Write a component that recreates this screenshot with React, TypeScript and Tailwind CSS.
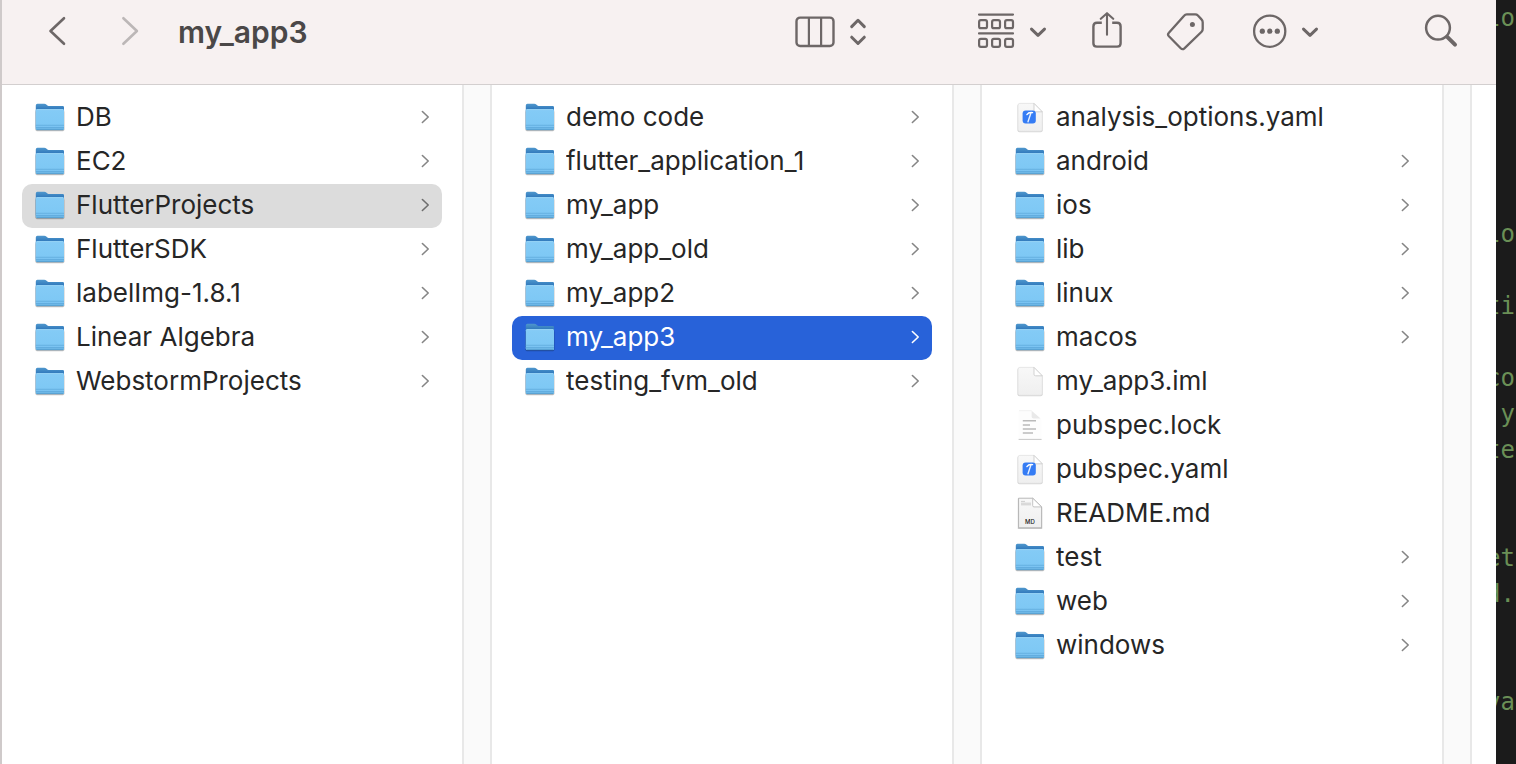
import { useState, type ReactNode } from 'react';

type Kind = 'folder' | 'yaml' | 'blank' | 'lines' | 'markdown';
type Entry = { name: string; kind?: Kind };

const columns: { label: string; selected?: string; entries: Entry[] }[] = [
  {
    label: 'Projects',
    selected: 'FlutterProjects',
    entries: [
      { name: 'DB' },
      { name: 'EC2' },
      { name: 'FlutterProjects' },
      { name: 'FlutterSDK' },
      { name: 'labelImg-1.8.1' },
      { name: 'Linear Algebra' },
      { name: 'WebstormProjects' },
    ],
  },
  {
    label: 'FlutterProjects',
    selected: 'my_app3',
    entries: [
      { name: 'demo code' },
      { name: 'flutter_application_1' },
      { name: 'my_app' },
      { name: 'my_app_old' },
      { name: 'my_app2' },
      { name: 'my_app3' },
      { name: 'testing_fvm_old' },
    ],
  },
  {
    label: 'my_app3',
    entries: [
      { name: 'analysis_options.yaml', kind: 'yaml' },
      { name: 'android' },
      { name: 'ios' },
      { name: 'lib' },
      { name: 'linux' },
      { name: 'macos' },
      { name: 'my_app3.iml', kind: 'blank' },
      { name: 'pubspec.lock', kind: 'lines' },
      { name: 'pubspec.yaml', kind: 'yaml' },
      { name: 'README.md', kind: 'markdown' },
      { name: 'test' },
      { name: 'web' },
      { name: 'windows' },
    ],
  },
];

const editorLines = [
  'lo', '', '', '', '', '', 'lo', '', 'ti', '', 'co', 'y', 'te', '', '', 'et', 'd.', '', '', 'va',
];

function Gradients() {
  return (
    <svg width="0" height="0" className="absolute" aria-hidden="true">
      <defs>
        <linearGradient id="folder-back" x1="0" y1="0" x2="0" y2="1">
          <stop offset="0" stopColor="#4f97cd" />
          <stop offset="0.25" stopColor="#2f78bb" />
          <stop offset="1" stopColor="#2f78bb" />
        </linearGradient>
        <linearGradient id="folder-front" x1="0" y1="0" x2="0" y2="1">
          <stop offset="0" stopColor="#84cbf6" />
          <stop offset="1" stopColor="#7cc7f4" />
        </linearGradient>
        <linearGradient id="paper" x1="0" y1="0" x2="0" y2="1">
          <stop offset="0" stopColor="#f8f8f8" />
          <stop offset="1" stopColor="#efefef" />
        </linearGradient>
      </defs>
    </svg>
  );
}

function FolderIcon() {
  return (
    <svg width="32" height="32" viewBox="0 0 32 32" className="shrink-0" aria-hidden="true">
      <rect x="1.2" y="8.6" width="29.4" height="21.8" rx="1.8" fill="#000" opacity="0.12" />
      <rect x="1.6" y="9.6" width="28.6" height="20.2" rx="1.5" fill="#000" opacity="0.22" />
      <path d="M1.8 4.4Q1.8 2.8 3.4 2.8H10.2Q11.6 2.8 12.6 3.7L13.4 4.4Q14.3 5 15.8 5H28.8Q30 5 30 6.2V26H1.8Z" fill="url(#folder-back)" />
      <path d="M1.8 9.2Q1.8 8.2 2.9 8.2H28.9Q30 8.2 30 9.2V27.8Q30 29 28.8 29H3Q1.8 29 1.8 27.8Z" fill="url(#folder-front)" />
      <path d="M2.6 8.6H29.2" stroke="#a2daf9" strokeWidth="0.8" />
      <path d="M1.8 26H30V27.8Q30 29 28.8 29H3Q1.8 29 1.8 27.8Z" fill="#6db7e6" />
      <path d="M1.8 24.3H30M1.8 26.4H30" stroke="#5fa9dc" strokeWidth="0.8" />
      <path d="M2.6 28.7H29.2" stroke="#4b93c5" strokeWidth="0.7" />
    </svg>
  );
}

function FileIcon({ kind }: { kind: Kind }) {
  return (
    <svg width="32" height="32" viewBox="0 0 32 32" className="shrink-0" aria-hidden="true">
      {kind === 'yaml' || kind === 'blank' ? (
        <>
          <path d="M3.5 5Q3.5 3 5.5 3H20.2L28.7 11.6V29.2Q28.7 31.2 26.7 31.2H5.5Q3.5 31.2 3.5 29.2Z" fill="#000" opacity="0.16" />
          <path d="M4 4.2Q4 2.4 5.8 2.4H20L28.3 10.8V28.6Q28.3 30.3 26.5 30.3H5.8Q4 30.3 4 28.6Z" fill="url(#paper)" stroke="#dedede" strokeWidth="0.7" />
          <path d="M20 2.4V9.2Q20 10.8 21.6 10.8H28.3Z" fill="#fff" stroke="#c8c8c8" strokeWidth="0.8" />
        </>
      ) : null}
      {kind === 'yaml' ? (
        <>
          <rect x="8.6" y="9.4" width="13.2" height="13.2" rx="3" fill="#357cf4" />
          <path d="M16.9 12L14 20.8" stroke="#e8f1ff" strokeWidth="1.4" strokeLinecap="round" />
          <path d="M12.9 13.6Q14.6 11 18.6 11.6" fill="none" stroke="#fff" strokeWidth="1.3" strokeLinecap="round" />
        </>
      ) : null}
      {kind === 'lines' ? (
        <>
          <path d="M4.4 1.6H17.6L27.6 11V30H4.4Z" fill="#fdfdfd" />
          <path d="M5 1.7H17.6" stroke="#eeeeee" strokeWidth="0.8" />
          <path d="M17.6 1.7V7.6Q17.6 9.6 19.6 9.6H26.6Z" fill="#e9e9e9" />
          <path d="M4.6 30.4H27.6" stroke="#c8c8c8" strokeWidth="1" />
          <path d="M8.8 11.8H22M8.8 15.9H16M8.8 20H22M8.8 24H19" stroke="#bababa" strokeWidth="1.5" />
        </>
      ) : null}
      {kind === 'markdown' ? (
        <>
          <path d="M3.8 1.6H19L28.2 10.6V32H3.8Z" fill="#000" opacity="0.2" />
          <path d="M4.6 1.2H18.7L27.6 9.9V30.8H4.6Z" fill="url(#paper)" stroke="#a9a9a9" strokeWidth="0.8" />
          <path d="M18.7 1.2V8.5Q18.7 9.9 20 9.9H27.6Z" fill="#fff" stroke="#b5b5b5" strokeWidth="0.8" />
          <path d="M7 4.4H11M7 6.2H17M7 7.8H17" stroke="#cccccc" strokeWidth="1" />
          <text x="16" y="27.4" textAnchor="middle" fontSize="6" fontWeight="500" fontFamily="Inter, sans-serif" fill="#222">MD</text>
        </>
      ) : null}
    </svg>
  );
}

function Disclosure({ className }: { className: string }) {
  return (
    <svg width="10" height="16" viewBox="0 0 10 16" fill="none" stroke="currentColor" strokeWidth="1.6" strokeLinecap="round" strokeLinejoin="round" className={className} aria-hidden="true">
      <path d="M2.4 2.5L8.2 8L2.4 13.5" />
    </svg>
  );
}

function ToolButton({ label, className = '', children, disabled }: { label: string; className?: string; children: ReactNode; disabled?: boolean }) {
  return (
    <button type="button" aria-label={label} disabled={disabled} className={`flex shrink-0 items-center gap-3 ${className}`}>
      {children}
    </button>
  );
}

function DownChevron() {
  return (
    <svg width="20" height="20" viewBox="0 0 20 20" fill="none" stroke="currentColor" strokeWidth="3" strokeLinecap="round" strokeLinejoin="round">
      <path d="M3.5 7.1L10 13.3L16.5 7.1" />
    </svg>
  );
}

function Toolbar() {
  return (
    <header className="h-[85px] shrink-0 border-b border-[#d3cfcf] bg-[#f7f1f1] text-[#6d6767]">
      <div className="flex h-16 items-center pr-9 pl-11">
        <ToolButton label="Back">
          <svg width="24" height="32" viewBox="0 0 24 32" fill="none" stroke="currentColor" strokeWidth="2.6" strokeLinecap="round" strokeLinejoin="round">
            <path d="M18 2.2L4.5 15L18 27.8" />
          </svg>
        </ToolButton>
        <ToolButton label="Forward" disabled className="ml-12 text-[#bcb7b7]">
          <svg width="24" height="32" viewBox="0 0 24 32" fill="none" stroke="currentColor" strokeWidth="2.6" strokeLinecap="round" strokeLinejoin="round">
            <path d="M5.4 2.2L18.9 15L5.4 27.8" />
          </svg>
        </ToolButton>
        <h1 className="ml-9 text-[30px] leading-8 font-semibold text-[#4b4848]">my_app3</h1>

        <div className="ml-auto flex items-center">
          <ToolButton label="View as columns" className="mr-27">
            <svg width="42" height="34" viewBox="0 0 42 34" fill="none" stroke="currentColor" strokeWidth="2.4">
              <rect x="2.5" y="2.6" width="37" height="28.4" rx="3.6" />
              <path d="M14.9 3V31M27.1 3V31" strokeWidth="2.2" />
            </svg>
            <svg width="20" height="32" viewBox="0 0 20 32" fill="none" stroke="currentColor" strokeWidth="3" strokeLinecap="round" strokeLinejoin="round">
              <path d="M3.7 10.6L10 4.3L16.3 10.6M3.7 21.2L10 27.5L16.3 21.2" />
            </svg>
          </ToolButton>
          <ToolButton label="Group items" className="mr-11">
            <svg width="40" height="40" viewBox="0 0 40 40" fill="none" stroke="currentColor" strokeWidth="2.2" strokeLinecap="round">
              <path d="M3 2.6H37M3 21.4H37" />
              <rect x="3.1" y="8.1" width="7.9" height="8.1" rx="1.8" />
              <rect x="16.1" y="8.1" width="7.9" height="8.1" rx="1.8" />
              <rect x="29.1" y="8.1" width="7.9" height="8.1" rx="1.8" />
              <rect x="3.1" y="26.8" width="7.9" height="8.1" rx="1.8" />
              <rect x="16.1" y="26.8" width="7.9" height="8.1" rx="1.8" />
              <rect x="29.1" y="26.8" width="7.9" height="8.1" rx="1.8" />
            </svg>
            <DownChevron />
          </ToolButton>
          <ToolButton label="Share" className="mr-11">
            <svg width="30" height="40" viewBox="0 0 30 40" fill="none" stroke="currentColor" strokeWidth="2.4" strokeLinejoin="round">
              <path d="M9.8 10.8H5Q1.4 10.8 1.4 14.4V31.2Q1.4 34.6 4.9 34.6H25.1Q28.6 34.6 28.6 31.2V14.4Q28.6 10.8 25 10.8H20.2" />
              <path d="M15 22V1.2M8.8 6L15 0.4L21.2 6" strokeWidth="2.1" strokeLinecap="round" transform="translate(0 0.8)" />
            </svg>
          </ToolButton>
          <ToolButton label="Edit tags" className="mr-[46px]">
            <svg width="40" height="40" viewBox="0 0 40 40" fill="none" stroke="currentColor" strokeWidth="2.3" strokeLinecap="round" strokeLinejoin="round">
              <path d="M20.8 2.4H29.2Q30.8 2.4 31.9 3.5L35.5 7.4Q36.7 8.6 36.7 10.2V17Q36.7 18.6 35.6 19.7L18.4 36.3Q16.5 38 14.7 36.2L2.9 24.3Q1.2 22.5 2.9 20.7L18.1 3.7Q19.2 2.4 20.8 2.4Z" />
              <circle cx="26.4" cy="12.4" r="2.5" fill="currentColor" stroke="none" />
            </svg>
          </ToolButton>
          <ToolButton label="More actions" className="mr-26">
            <svg width="36" height="36" viewBox="0 0 36 36" fill="none" stroke="currentColor" strokeWidth="2.3">
              <circle cx="17.7" cy="17.2" r="15.6" />
              <g fill="currentColor" stroke="none">
                <circle cx="10.3" cy="17.2" r="2.6" />
                <circle cx="17.8" cy="17.2" r="2.6" />
                <circle cx="25.3" cy="17.2" r="2.6" />
              </g>
            </svg>
            <DownChevron />
          </ToolButton>
          <ToolButton label="Search">
            <svg width="36" height="36" viewBox="0 0 36 36" fill="none" stroke="currentColor" strokeLinecap="round">
              <circle cx="14" cy="13.7" r="11.9" strokeWidth="2.5" />
              <path d="M23.2 22.8L31 30.6" strokeWidth="4" />
            </svg>
          </ToolButton>
        </div>
      </div>
    </header>
  );
}

function Row({ entry, state, onSelect }: { entry: Entry; state: 'none' | 'path' | 'active'; onSelect: () => void }) {
  const kind = entry.kind ?? 'folder';
  const tone =
    state === 'active' ? 'bg-[#2862d9] text-white' : state === 'path' ? 'bg-[#dcdcdc] text-[#262626]' : 'text-[#262626]';
  const arrow = state === 'active' ? 'text-white' : state === 'path' ? 'text-[#6e6e6e]' : 'text-[#858585]';
  return (
    <li>
      <button type="button" onClick={onSelect} className={`flex h-11 w-full items-center rounded-[10px] px-3 pb-0.5 text-left ${tone}`}>
        {kind === 'folder' ? <FolderIcon /> : <FileIcon kind={kind} />}
        <span className="ml-2.5 flex-1 truncate text-[26px] leading-8">{entry.name}</span>
        {kind === 'folder' ? <Disclosure className={`shrink-0 ${arrow}`} /> : null}
      </button>
    </li>
  );
}

export default function App() {
  const [selection, setSelection] = useState(columns.map((c) => c.selected));
  const active = selection.reduce((last, name, i) => (name ? i : last), 0);

  return (
    <div className="flex h-screen overflow-hidden bg-[#1b1b1b] font-['Inter','Liberation_Sans',sans-serif]">
      <Gradients />
      <main className="flex min-w-0 flex-1 flex-col border-l-2 border-[#cfcaca] bg-white">
        <Toolbar />
        <div className="flex min-h-0 flex-1">
          {columns.map((column, i) => (
            <section key={column.label} aria-label={column.label} className="flex min-w-0 flex-1">
              <ul className="min-w-0 flex-1 px-5 py-[11px]">
                {column.entries.map((entry) => (
                  <Row
                    key={entry.name}
                    entry={entry}
                    state={selection[i] !== entry.name ? 'none' : i === active ? 'active' : 'path'}
                    onSelect={() => setSelection(selection.map((s, j) => (j === i ? entry.name : j > i ? undefined : s)))}
                  />
                ))}
              </ul>
              <div className="w-[30px] shrink-0 border-x-2 border-[#e8e8e8] bg-[#fafafa]" />
            </section>
          ))}
          <div className="w-6 shrink-0" />
        </div>
      </main>
      <aside className="w-5 shrink-0 overflow-hidden pr-px font-['DejaVu_Sans_Mono',monospace] text-2xl text-[#6a8f56]">
        {editorLines.map((line, i) => (
          <div key={i} className="flex h-9 items-center justify-end">
            {line}
          </div>
        ))}
      </aside>
    </div>
  );
}
